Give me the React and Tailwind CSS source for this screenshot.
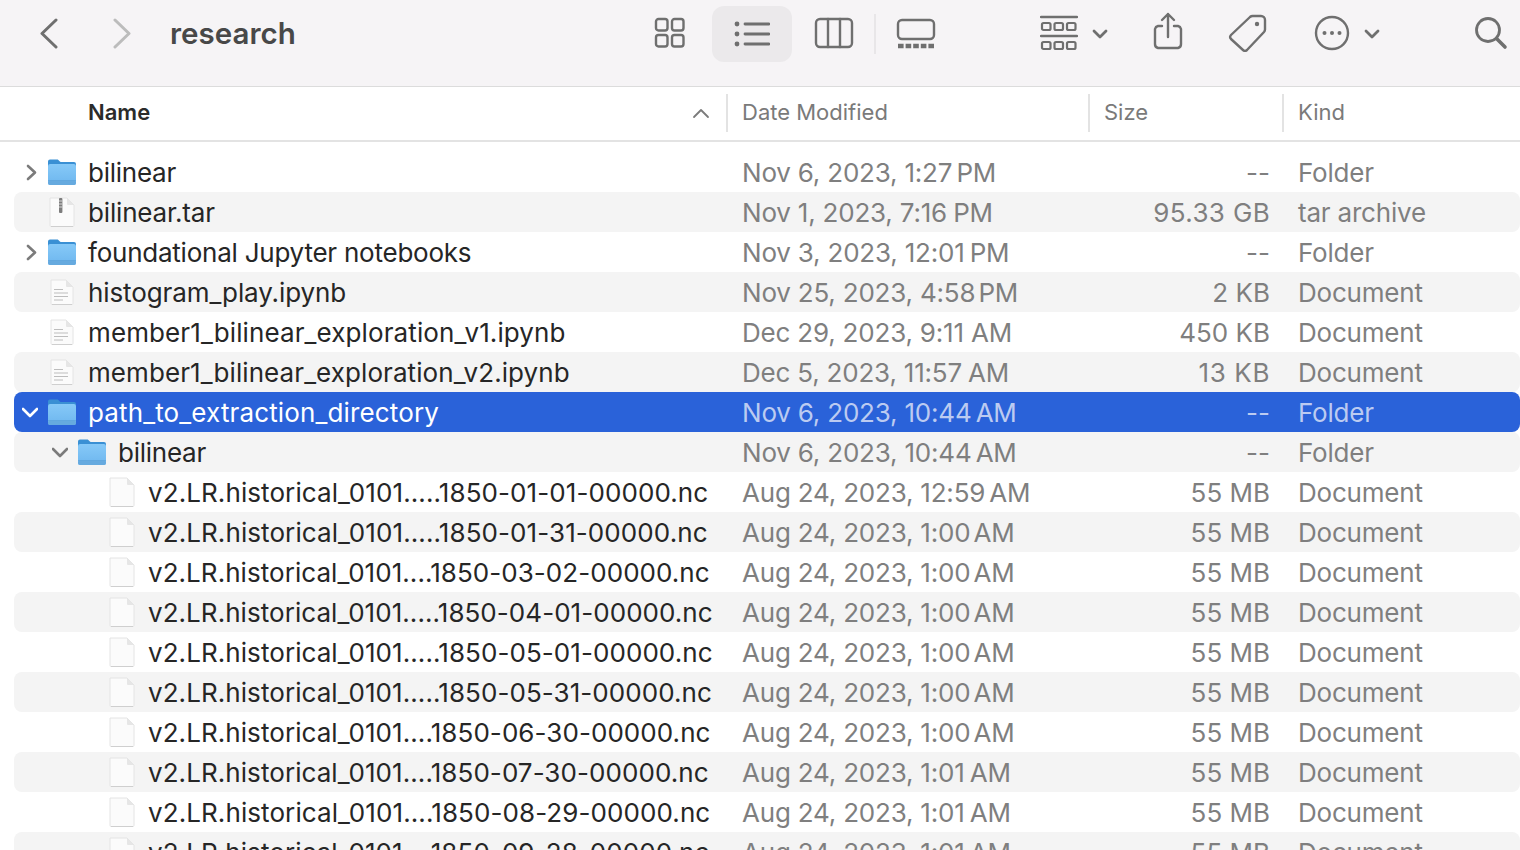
import React from "react";

const numbered = "tracking-[0.07px]";

const rows = [
  { name: "bilinear", track: "tracking-[-0.25px]", date: "Nov 6, 2023, 1:27", mer: "PM", gap: "-ml-[3px]", size: "--", kind: "Folder", icon: "folder", arrow: "right", depth: 0 },
  { name: "bilinear.tar", track: "tracking-[-0.17px]", date: "Nov 1, 2023, 7:16", mer: "PM", gap: "-ml-[1px]", size: "95.33 GB", sizeTrack: "tracking-[0.35px]", kind: "tar archive", icon: "tar", depth: 0 },
  { name: "foundational Jupyter notebooks", track: "tracking-[-0.23px]", date: "Nov 3, 2023, 12:01", mer: "PM", gap: "-ml-[2px]", size: "--", kind: "Folder", icon: "folder", arrow: "right", depth: 0 },
  { name: "histogram_play.ipynb", track: "tracking-[-0.1px]", date: "Nov 25, 2023, 4:58", mer: "PM", gap: "-ml-[4px]", size: "2 KB", kind: "Document", icon: "doc", depth: 0 },
  { name: "member1_bilinear_exploration_v1.ipynb", track: "tracking-[0.11px]", date: "Dec 29, 2023, 9:11", mer: "AM", gap: "ml-0", size: "450 KB", kind: "Document", icon: "doc", depth: 0 },
  { name: "member1_bilinear_exploration_v2.ipynb", track: "tracking-[0.08px]", date: "Dec 5, 2023, 11:57", mer: "AM", gap: "-ml-[1px]", size: "13 KB", sizeTrack: "tracking-[0.6px]", kind: "Document", icon: "doc", depth: 0 },
  { name: "path_to_extraction_directory", track: "tracking-[0.14px]", date: "Nov 6, 2023, 10:44", mer: "AM", gap: "-ml-[3px]", size: "--", kind: "Folder", icon: "folder", arrow: "down", depth: 0, selected: true },
  { name: "bilinear", track: "tracking-[-0.25px]", date: "Nov 6, 2023, 10:44", mer: "AM", gap: "-ml-[3px]", size: "--", kind: "Folder", icon: "folder", arrow: "down", depth: 1 },
  { name: "v2.LR.historical_0101.....1850-01-01-00000.nc", track: "tracking-[0.09px]", date: "Aug 24, 2023, 12:59", mer: "AM", gap: "-ml-[3px]", size: "55 MB", kind: "Document", icon: "blank", depth: 2 },
  { name: "v2.LR.historical_0101.....1850-01-31-00000.nc", track: "tracking-[0.09px]", date: "Aug 24, 2023, 1:00", mer: "AM", gap: "-ml-[4px]", size: "55 MB", kind: "Document", icon: "blank", depth: 2 },
  { name: "v2.LR.historical_0101....1850-03-02-00000.nc", track: "tracking-[0.05px]", date: "Aug 24, 2023, 1:00", mer: "AM", gap: "-ml-[4px]", size: "55 MB", kind: "Document", icon: "blank", depth: 2 },
  { name: "v2.LR.historical_0101.....1850-04-01-00000.nc", track: "tracking-[0.05px]", date: "Aug 24, 2023, 1:00", mer: "AM", gap: "-ml-[4px]", size: "55 MB", kind: "Document", icon: "blank", depth: 2 },
  { name: "v2.LR.historical_0101.....1850-05-01-00000.nc", track: numbered, date: "Aug 24, 2023, 1:00", mer: "AM", gap: "-ml-[4px]", size: "55 MB", kind: "Document", icon: "blank", depth: 2 },
  { name: "v2.LR.historical_0101.....1850-05-31-00000.nc", track: numbered, date: "Aug 24, 2023, 1:00", mer: "AM", gap: "-ml-[4px]", size: "55 MB", kind: "Document", icon: "blank", depth: 2 },
  { name: "v2.LR.historical_0101....1850-06-30-00000.nc", track: numbered, date: "Aug 24, 2023, 1:00", mer: "AM", gap: "-ml-[4px]", size: "55 MB", kind: "Document", icon: "blank", depth: 2 },
  { name: "v2.LR.historical_0101....1850-07-30-00000.nc", track: numbered, date: "Aug 24, 2023, 1:01", mer: "AM", gap: "-ml-[2px]", size: "55 MB", kind: "Document", icon: "blank", depth: 2 },
  { name: "v2.LR.historical_0101....1850-08-29-00000.nc", track: "tracking-[0.09px]", date: "Aug 24, 2023, 1:01", mer: "AM", gap: "-ml-[2px]", size: "55 MB", kind: "Document", icon: "blank", depth: 2 },
  { name: "v2.LR.historical_0101....1850-09-28-00000.nc", track: numbered, date: "Aug 24, 2023, 1:01", mer: "AM", gap: "-ml-[2px]", size: "55 MB", kind: "Document", icon: "blank", depth: 2 },
];

const Folder = () => (
  <svg width="30" height="28" viewBox="0 0 30 28" className="shrink-0">
    <defs>
      <linearGradient id="folderBody" x1="0" y1="0" x2="0" y2="1">
        <stop offset="0" stopColor="#86c9f8" />
        <stop offset="1" stopColor="#6db6ee" />
      </linearGradient>
    </defs>
    <path d="M1 7V3.5A2 2 0 0 1 3 1.5h7c1.2 0 1.6.6 2.4 1.5.6.7 1 1 2 1H27a2 2 0 0 1 2 2V9H1z" fill="#3a90d4" />
    <rect x="1" y="6" width="28" height="21" rx="2.2" fill="url(#folderBody)" />
    <rect x="1" y="22.5" width="28" height="4.5" rx="2" fill="#66aadf" />
    <path d="M1 22.5h28" stroke="#5aa0d6" strokeWidth="0.6" />
  </svg>
);

const Sheet = ({ w, h, lines, zip }) => (
  <svg width={w} height={h} viewBox={`0 0 ${w} ${h}`} className="shrink-0">
    <path
      d={`M1 1h${w - 9}l7 7V${h - 1.5}a1 1 0 0 1-1 1H2a1 1 0 0 1-1-1z`}
      fill="#fbfbfb"
      stroke="#e4e4e4"
      strokeWidth="1"
    />
    <path d={`M2 ${h - 0.5}h${w - 4}`} stroke="#cfcfcf" strokeWidth="1" />
    <path d={`M${w - 8} 1v6a1 1 0 0 0 1 1h6z`} fill="#e6e6e6" />
    {lines && (
      <g stroke="#bdbdbd" strokeWidth="1.2">
        <path d="M4 10.5h9M4 14h14M4 17.5h14M4 21h9" />
      </g>
    )}
    {zip && (
      <g>
        <rect x="10" y="1" width="3.4" height="15" rx="1" fill="#7d7d7d" />
        <path d="M10 4h3.4M10 7h3.4M10 10h3.4" stroke="#d8d8d8" strokeWidth="1" />
      </g>
    )}
  </svg>
);

const rowIcon = { folder: <Folder />, tar: <Sheet w={26} h={30} zip />, doc: <Sheet w={24} h={26} lines />, blank: <Sheet w={26} h={30} /> };

const Arrow = ({ dir, selected }) => (
  <svg width="16" height="20" viewBox="0 0 16 20" className="shrink-0">
    <path
      d={dir === "right" ? "M6 4l7 6.5L6 17" : "M1 7l7 7 7-7"}
      fill="none"
      stroke={selected ? "#ffffff" : "#7b7b7b"}
      strokeWidth="2.6"
      strokeLinecap="round"
      strokeLinejoin="round"
    />
  </svg>
);

const Row = ({ row, index }) => {
  const band = row.selected ? "bg-[#2a62d9]" : index % 2 === 1 ? "bg-[#f4f4f4]" : "";
  const muted = row.selected ? "text-[#bccbf1]" : "text-[#7f7f7f]";
  return (
    <div className={`ml-[14px] h-10 flex items-center rounded-lg text-[26px] ${band}`}>
      <div className="w-[728px] flex items-center shrink-0" style={{ paddingLeft: 8 + row.depth * 30 }}>
        <div className="w-4 flex justify-center shrink-0">{row.arrow && <Arrow dir={row.arrow} selected={row.selected} />}</div>
        <div className="w-8 ml-2 mr-[10px] flex justify-center shrink-0">{rowIcon[row.icon]}</div>
        <span className={`whitespace-nowrap ${row.track} ${row.selected ? "text-white" : "text-[#262626]"}`}>{row.name}</span>
      </div>
      <div className={`w-[380px] shrink-0 whitespace-nowrap tracking-[-0.2px] ${muted}`}>
        {row.date} <span className={`inline-block ${row.gap}`}>{row.mer}</span>
      </div>
      <div className={`w-[148px] shrink-0 text-right whitespace-nowrap ${row.sizeTrack || ""} ${muted}`}>{row.size}</div>
      <div className={`ml-7 whitespace-nowrap tracking-[-0.2px] ${muted}`}>{row.kind}</div>
    </div>
  );
};

const stroke = { fill: "none", stroke: "#6f6f6f", strokeWidth: 2.4, strokeLinecap: "round", strokeLinejoin: "round" };

const Toolbar = () => (
  <div className="h-[87px] bg-[#f6f4f6] border-b border-[#dcdcdc] flex items-start">
    <svg width="20" height="32" viewBox="0 0 20 32" className="ml-[39px] mt-[17px] shrink-0">
      <path d="M17 3L3 16.5 17 30" {...stroke} strokeWidth="3" />
    </svg>
    <svg width="20" height="32" viewBox="0 0 20 32" className="ml-[53px] mt-[17px] shrink-0">
      <path d="M3 3l14 13.5L3 30" {...stroke} stroke="#bcbcbc" strokeWidth="3" />
    </svg>
    <span className="ml-[38px] mt-[14px] w-[125px] text-[29.5px] leading-[38px] font-semibold text-[#484848]">research</span>
    <svg width="32" height="32" viewBox="0 0 32 32" className="ml-[359px] mt-[17px] shrink-0">
      <g {...stroke}>
        <rect x="2" y="2" width="11.5" height="11.5" rx="2.5" />
        <rect x="18" y="2" width="11.5" height="11.5" rx="2.5" />
        <rect x="2" y="18" width="11.5" height="11.5" rx="2.5" />
        <rect x="18" y="18" width="11.5" height="11.5" rx="2.5" />
      </g>
    </svg>
    <div className="ml-[26px] mt-[6px] w-20 h-14 rounded-xl bg-[#ebe9eb] flex items-center justify-center shrink-0">
      <svg width="36" height="28" viewBox="0 0 36 28">
        <g fill="#6f6f6f">
          <circle cx="3" cy="4" r="2.4" />
          <circle cx="3" cy="14" r="2.4" />
          <circle cx="3" cy="24" r="2.4" />
        </g>
        <path d="M11 4h24M11 14h24M11 24h24" {...stroke} strokeWidth="2.8" />
      </svg>
    </div>
    <svg width="40" height="32" viewBox="0 0 40 32" className="ml-[22px] mt-[17px] shrink-0">
      <g {...stroke}>
        <rect x="2" y="2" width="36" height="28" rx="4" />
        <path d="M14 2v28M26 2v28" />
      </g>
    </svg>
    <div className="ml-5 mt-[14px] w-[2px] h-[40px] bg-[#e8e6e8] shrink-0" />
    <svg width="40" height="32" viewBox="0 0 40 32" className="ml-5 mt-[18px] shrink-0">
      <rect x="2" y="2" width="36" height="19" rx="4" {...stroke} />
      <path d="M2 28h36" fill="none" stroke="#6f6f6f" strokeWidth="4.6" strokeDasharray="5.6 2" />
    </svg>
    <svg width="38" height="36" viewBox="0 0 38 36" className="ml-[104px] mt-[15px] shrink-0">
      <path d="M1 2h36M1 21h36" {...stroke} />
      <g fill="none" stroke="#6f6f6f" strokeWidth="2.2">
        <rect x="2" y="8" width="8.5" height="7" rx="1.5" />
        <rect x="14.5" y="8" width="8.5" height="7" rx="1.5" />
        <rect x="27" y="8" width="8.5" height="7" rx="1.5" />
        <rect x="2" y="27" width="8.5" height="7" rx="1.5" />
        <rect x="14.5" y="27" width="8.5" height="7" rx="1.5" />
        <rect x="27" y="27" width="8.5" height="7" rx="1.5" />
      </g>
    </svg>
    <svg width="16" height="12" viewBox="0 0 16 12" className="ml-[14px] mt-[28px] shrink-0">
      <path d="M2 3l6 6 6-6" {...stroke} strokeWidth="2.8" />
    </svg>
    <svg width="32" height="38" viewBox="0 0 32 38" className="ml-[44px] mt-[12px] shrink-0">
      <g {...stroke}>
        <path d="M10 14H6a4 4 0 0 0-3 3v15a4 4 0 0 0 3 4h20a4 4 0 0 0 3-4V17a4 4 0 0 0-3-3h-4" />
        <path d="M16 25V2M10 8l6-6 6 6" />
      </g>
    </svg>
    <svg width="40" height="38" viewBox="0 0 40 38" className="ml-[44px] mt-[14px] shrink-0">
      <path d="M3 21L22 3a4 4 0 0 1 3-1h8a4 4 0 0 1 4 4v9a4 4 0 0 1-1 3L19 36a3 3 0 0 1-4 0L3 25a3 3 0 0 1 0-4z" {...stroke} />
      <circle cx="29" cy="10" r="2.2" fill="#6f6f6f" />
    </svg>
    <svg width="36" height="36" viewBox="0 0 36 36" className="ml-[46px] mt-[15px] shrink-0">
      <circle cx="18" cy="18" r="16" {...stroke} />
      <g fill="#6f6f6f">
        <circle cx="10.5" cy="18" r="2" />
        <circle cx="18" cy="18" r="2" />
        <circle cx="25.5" cy="18" r="2" />
      </g>
    </svg>
    <svg width="16" height="12" viewBox="0 0 16 12" className="ml-[14px] mt-[28px] shrink-0">
      <path d="M2 3l6 6 6-6" {...stroke} strokeWidth="2.8" />
    </svg>
    <svg width="34" height="34" viewBox="0 0 34 34" className="ml-[94px] mt-[16px] shrink-0">
      <circle cx="14" cy="14" r="11.5" {...stroke} strokeWidth="2.8" />
      <path d="M22.5 22.5L31 31" {...stroke} strokeWidth="3.6" />
    </svg>
  </div>
);

const Header = () => (
  <div className="h-[55px] pb-[2px] border-b-2 border-[#e3e3e3] flex items-center text-[22px] text-[#7a7a7a] bg-white">
    <div className="w-[726px] shrink-0 flex items-center justify-between pl-[88px] pr-4">
      <span className="font-semibold text-[#2b2b2b]">Name</span>
      <svg width="18" height="12" viewBox="0 0 18 12">
        <path d="M2 10l7-7 7 7" fill="none" stroke="#7b7b7b" strokeWidth="1.8" strokeLinecap="round" strokeLinejoin="round" />
      </svg>
    </div>
    <div className="w-[362px] shrink-0 h-[38px] border-l-2 border-[#e3e3e3] pl-[14px] flex items-center">Date Modified</div>
    <div className="w-[194px] shrink-0 h-[38px] border-l-2 border-[#e3e3e3] pl-[14px] flex items-center">Size</div>
    <div className="h-[38px] border-l-2 border-[#e3e3e3] pl-[14px] flex items-center">Kind</div>
  </div>
);

export default function App() {
  return (
    <div className="w-[1520px] h-[850px] overflow-hidden bg-white font-['Inter',sans-serif]">
      <Toolbar />
      <Header />
      <div className="pt-[10px]">
        {rows.map((row, i) => (
          <Row key={i} row={row} index={i} />
        ))}
      </div>
    </div>
  );
}
